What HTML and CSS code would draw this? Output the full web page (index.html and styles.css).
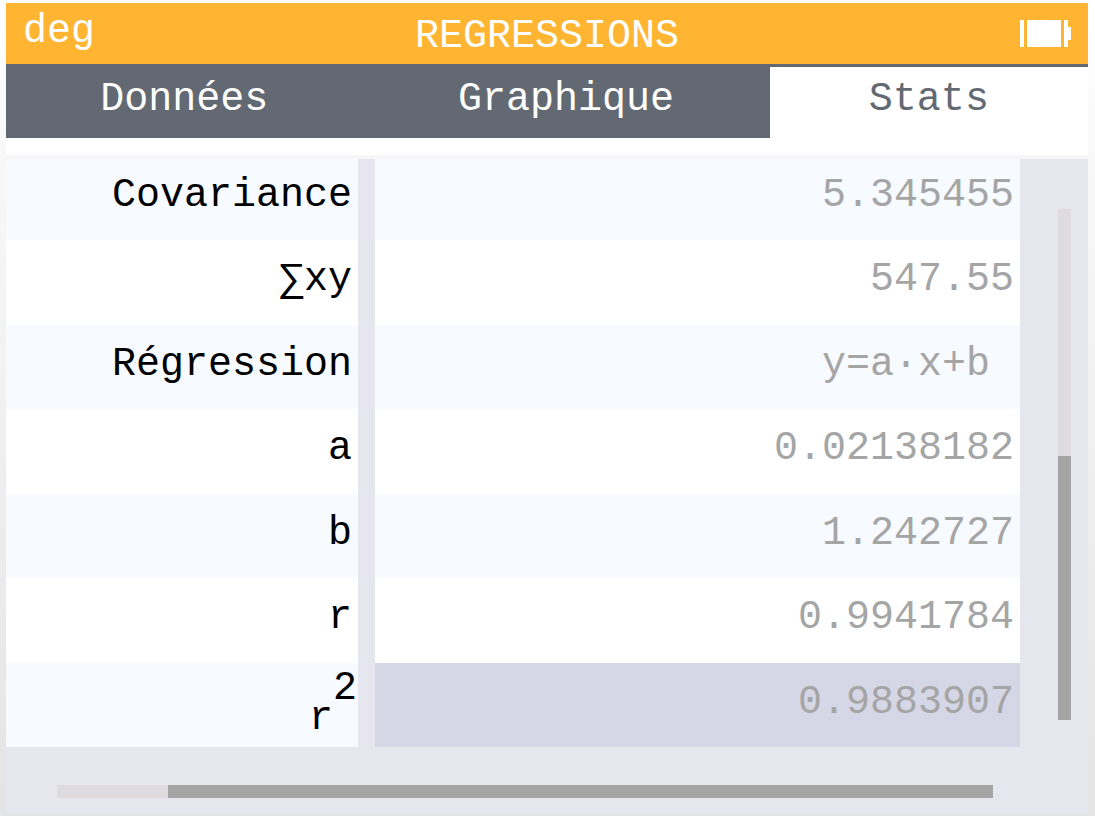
FILE: index.html
```html
<!DOCTYPE html>
<html lang="fr">
<head>
<meta charset="utf-8">
<meta name="viewport" content="width=device-width, initial-scale=1">
<title>Regressions</title>
<link rel="stylesheet" href="styles.css">
</head>
<body>
<div class="screen">
  <header class="titlebar">
    <span class="angle-unit">deg</span>
    <h1 class="title">REGRESSIONS</h1>
    <svg class="battery" viewBox="0 0 51 27" width="51" height="27" shape-rendering="crispEdges" role="img" aria-label="Batterie">
      <path fill="#fff" d="M0 0h4v27H0zM7 0h34v27H7zM44 0h4v7h3v13h-3v7h-4z"/>
    </svg>
  </header>
  <nav class="tabs">
    <button class="tab" type="button">Données</button>
    <button class="tab wide" type="button">Graphique</button>
    <button class="tab narrow active" type="button" aria-current="page">Stats</button>
  </nav>
  <main class="content">
    <div class="table-area">
      <table class="stats">
        <tbody>
          <tr><th scope="row">Covariance</th><td>5.345455</td></tr>
          <tr><th scope="row">∑xy</th><td>547.55</td></tr>
          <tr><th scope="row">Régression</th><td>y=a·x+b&nbsp;</td></tr>
          <tr><th scope="row">a</th><td>0.02138182</td></tr>
          <tr><th scope="row">b</th><td>1.242727</td></tr>
          <tr><th scope="row">r</th><td>0.9941784</td></tr>
          <tr class="selected"><th scope="row" class="power">r<sup>2</sup></th><td>0.9883907</td></tr>
        </tbody>
      </table>
      <div class="scroll-column"><div class="track vertical"><div class="thumb"></div></div></div>
    </div>
    <div class="scroll-row"><div class="track horizontal"><div class="thumb"></div></div></div>
  </main>
</div>
</body>
</html>
```
FILE: styles.css
```css
* { box-sizing: border-box; }

body {
  margin: 0;
  min-height: 100vh;
  padding: 3px 7px 2px 6px;
  display: flex;
  background: linear-gradient(#fff, #f8f8f8 20%, #e4e4e4);
  font-family: "Liberation Mono", monospace;
  font-size: 40px;
  line-height: 48px;
}

.screen {
  flex: 1;
  min-width: 0;
  display: flex;
  flex-direction: column;
  background: #fff;
}

.titlebar {
  display: grid;
  grid-template-columns: 1fr auto 1fr;
  align-items: start;
  padding: 5px 17px 3px;
  background: #ffb531;
  color: #fff;
}

.title {
  margin: 0;
  padding-top: 5px;
  font-size: inherit;
  font-weight: 400;
}

.battery {
  justify-self: end;
  margin-top: 12px;
}

.tabs {
  display: flex;
  background: linear-gradient(#636973 3px, #fff 3px);
}

.tab {
  flex: 7 1 0;
  padding: 12px 0 14px;
  border: 0;
  background: #636973;
  color: #fff;
  font: inherit;
  text-align: center;
}

.tab.wide { flex-grow: 8; }
.tab.narrow { flex-grow: 6.25; }

.tab.active {
  background: transparent;
  color: #636973;
}

.content {
  flex: 1;
  display: flex;
  flex-direction: column;
  margin-top: 17px;
  border-top: 4px solid #f6f6f6;
  background: #e6e6ef;
}

.table-area {
  flex: 1;
  display: flex;
}

.stats {
  flex: 1;
  display: flex;
}

.stats tbody {
  flex: 1;
  display: grid;
  grid-template-rows: 81px repeat(6, 1fr);
}

.stats tr {
  display: grid;
  grid-template-columns: 352px 1fr;
  column-gap: 17px;
}

.stats th,
.stats td {
  display: flex;
  align-items: center;
  justify-content: flex-end;
  padding: 0 6px 4px;
  background: #fff;
  font-weight: 400;
}

.stats th { color: #000; }
.stats td { color: #a5a5a5; }

.stats tr:nth-child(odd) > * { background: #f7faff; }
.stats tr:first-child > * { padding-bottom: 8px; }
.stats tr.selected td { background: #d6d7e6; }

.stats .power {
  align-items: flex-end;
  padding: 0 1px 4px;
}

.power sup {
  font-size: inherit;
  line-height: inherit;
  padding-bottom: 30px;
}

.scroll-column {
  width: 68px;
  padding: 50px 17px 27px 38px;
  display: flex;
}

.scroll-row {
  height: 67px;
  padding: 38px 95px 16px 51px;
}

.track {
  display: flex;
  justify-content: flex-end;
  background: #dfdadd;
}

.vertical {
  width: 13px;
  flex-direction: column;
}

.horizontal { height: 13px; }

.thumb { background: #a5a5a5; }
.vertical .thumb { height: 51.7%; }
.horizontal .thumb { width: 88.1%; }
```
